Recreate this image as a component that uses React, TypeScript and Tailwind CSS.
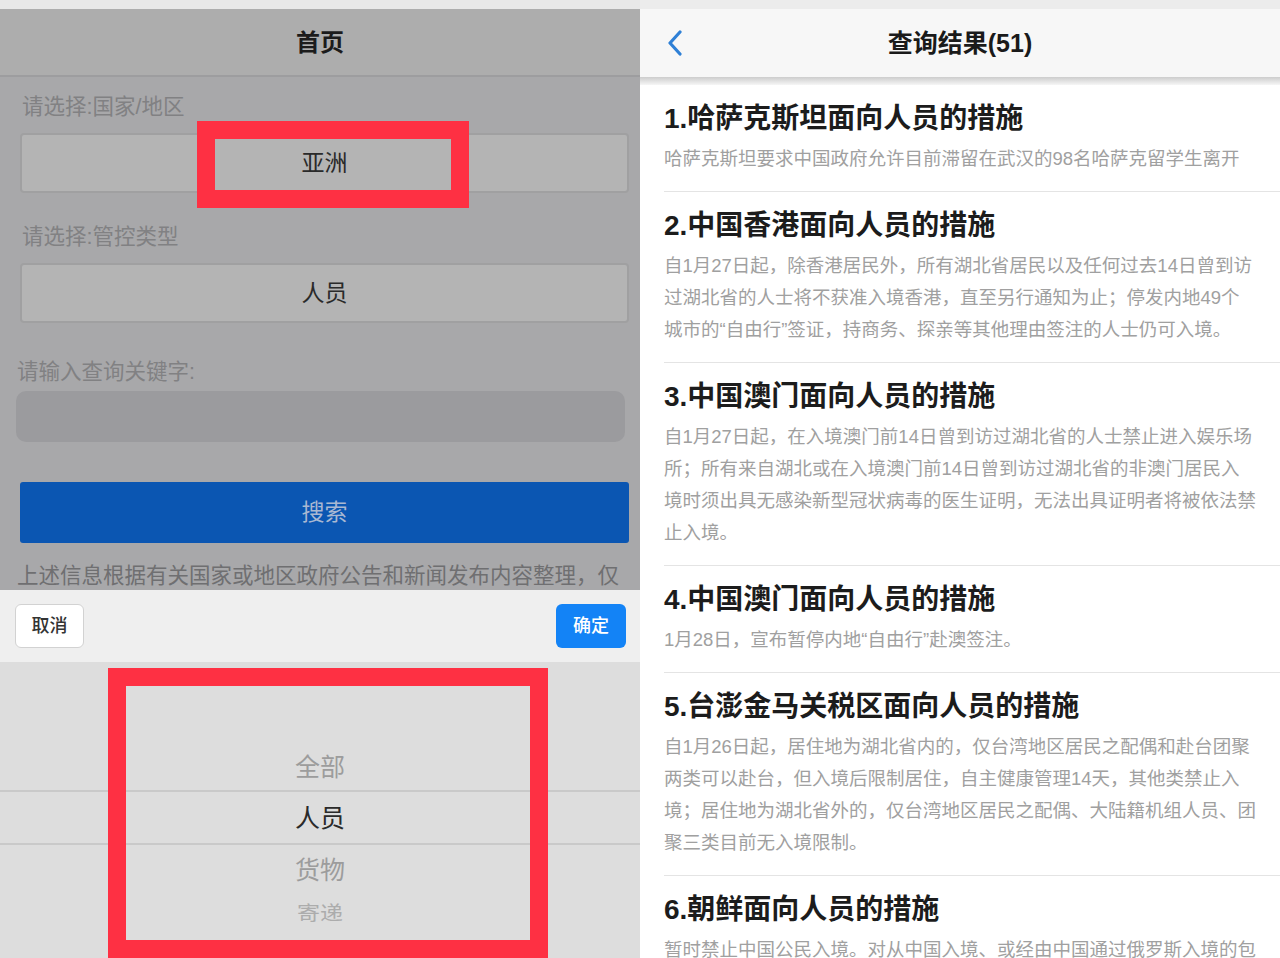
import React from "react";

const items: { title: string; lines: string[] }[] = [
  {
    title: "1.哈萨克斯坦面向人员的措施",
    lines: ["哈萨克斯坦要求中国政府允许目前滞留在武汉的98名哈萨克留学生离开"],
  },
  {
    title: "2.中国香港面向人员的措施",
    lines: [
      "自1月27日起，除香港居民外，所有湖北省居民以及任何过去14日曾到访",
      "过湖北省的人士将不获准入境香港，直至另行通知为止；停发内地49个",
      "城市的“自由行”签证，持商务、探亲等其他理由签注的人士仍可入境。",
    ],
  },
  {
    title: "3.中国澳门面向人员的措施",
    lines: [
      "自1月27日起，在入境澳门前14日曾到访过湖北省的人士禁止进入娱乐场",
      "所；所有来自湖北或在入境澳门前14日曾到访过湖北省的非澳门居民入",
      "境时须出具无感染新型冠状病毒的医生证明，无法出具证明者将被依法禁",
      "止入境。",
    ],
  },
  {
    title: "4.中国澳门面向人员的措施",
    lines: ["1月28日，宣布暂停内地“自由行”赴澳签注。"],
  },
  {
    title: "5.台澎金马关税区面向人员的措施",
    lines: [
      "自1月26日起，居住地为湖北省内的，仅台湾地区居民之配偶和赴台团聚",
      "两类可以赴台，但入境后限制居住，自主健康管理14天，其他类禁止入",
      "境；居住地为湖北省外的，仅台湾地区居民之配偶、大陆籍机组人员、团",
      "聚三类目前无入境限制。",
    ],
  },
  {
    title: "6.朝鲜面向人员的措施",
    lines: ["暂时禁止中国公民入境。对从中国入境、或经由中国通过俄罗斯入境的包"],
  },
];

function LeftPanel() {
  return (
    <div className="relative w-[640px] h-[958px] shrink-0 overflow-hidden bg-[#a8a8aa] flex flex-col">
      <div className="h-[9px] shrink-0 bg-[#e8e8e8]" />
      <div className="h-[68px] shrink-0 bg-[#adadad] flex items-center justify-center border-b-2 border-[#9d9d9f]">
        <span className="text-[24px] font-bold text-[#1c1c1c] leading-none pt-[2px]">首页</span>
      </div>
      <div className="flex flex-col shrink-0">
        <div className="mt-[16px] ml-[22px] text-[21.5px] leading-[28px] text-[#818183]">请选择:国家/地区</div>
        <div className="mt-[12px] ml-[20px] mr-[11px] h-[60px] rounded-[4px] border-2 border-[#a0a0a1] bg-[#b4b4b4] flex items-center justify-center">
          <span className="text-[23px] text-[#2a2a2a]">亚洲</span>
        </div>
        <div className="mt-[30px] ml-[22px] text-[21.5px] leading-[28px] text-[#818183]">请选择:管控类型</div>
        <div className="mt-[12px] ml-[20px] mr-[11px] h-[60px] rounded-[4px] border-2 border-[#a0a0a1] bg-[#b4b4b4] flex items-center justify-center">
          <span className="text-[23px] text-[#2a2a2a]">人员</span>
        </div>
        <div className="mt-[35px] ml-[17px] text-[21.5px] leading-[28px] text-[#818183]">请输入查询关键字:</div>
        <div className="mt-[5px] ml-[16px] mr-[15px] h-[51px] rounded-[10px] bg-[#9b9b9e]" />
        <div className="mt-[40px] ml-[20px] mr-[11px] h-[61px] rounded-[3px] bg-[#0b56b2] flex items-center justify-center">
          <span className="text-[23px] text-[#a9b8d2]">搜索</span>
        </div>
        <div className="mt-[18px] ml-[17px] text-[21.5px] leading-[30px] text-[#6f6f71] whitespace-nowrap">
          上述信息根据有关国家或地区政府公告和新闻发布内容整理，仅
        </div>
      </div>

      {/* bottom picker sheet */}
      <div className="absolute left-0 right-0 bottom-0 h-[368px] flex flex-col">
        <div className="h-[72px] shrink-0 bg-[#efefef] flex items-center justify-between pl-[15px] pr-[14px]">
          <div className="w-[69px] h-[44px] rounded-[6px] bg-white border border-[#d2d2d2] flex items-center justify-center">
            <span className="text-[18px] text-[#333] font-medium">取消</span>
          </div>
          <div className="w-[70px] h-[44px] rounded-[6px] bg-[#1383f6] flex items-center justify-center">
            <span className="text-[18px] text-white font-medium">确定</span>
          </div>
        </div>
        <div className="flex-1 bg-[#dddddd] flex flex-col">
          <div className="h-[78px] shrink-0" />
          <div className="h-[50px] shrink-0 flex items-center justify-center text-[25px] text-[#9c9c9c] pt-[6px]">全部</div>
          <div className="h-[55px] shrink-0 border-y-2 border-[#c9c9c9] flex items-center justify-center text-[25px] text-[#2a2a2a] pt-[2px]">
            人员
          </div>
          <div className="h-[50px] shrink-0 flex items-center justify-center text-[25px] text-[#9c9c9c] pt-[2px]">货物</div>
          <div className="h-[36px] shrink-0 flex items-center justify-center text-[23px] text-[#acacac] scale-y-[0.85]">寄递</div>
        </div>
      </div>

      {/* red annotation boxes */}
      <div className="absolute left-[197px] top-[121px] w-[272px] h-[87px] border-[18px] border-[#fe3043]" />
      <div className="absolute left-[108px] top-[668px] w-[440px] h-[290px] border-[18px] border-[#fe3043]" />
    </div>
  );
}

function RightPanel() {
  return (
    <div className="w-[640px] h-[958px] shrink-0 overflow-hidden bg-white flex flex-col">
      <div className="h-[9px] shrink-0 bg-[#ececec]" />
      <div className="h-[68px] shrink-0 bg-[#f7f7f7] relative flex items-center justify-center">
        <svg className="absolute left-[26px] top-[21px]" width="18" height="26" viewBox="0 0 18 26" fill="none">
          <path d="M14 2 L4 13 L14 24" stroke="#2f80d6" strokeWidth="3.2" strokeLinecap="round" strokeLinejoin="round" />
        </svg>
        <span className="text-[25px] font-bold text-[#1a1a1a] leading-none">查询结果(51)</span>
      </div>
      <div className="h-[8px] shrink-0 bg-gradient-to-b from-[#cdcdcd] to-[#f6f6f6]" />
      <div className="flex flex-col shrink-0">
        {items.map((it, i) => (
          <div key={i} className="ml-[24px] pt-[16px] pb-[16px] border-b border-[#e4e4e4] shrink-0">
            <div className="text-[28px] leading-[36px] font-bold text-[#1c1c1c] whitespace-nowrap">{it.title}</div>
            <div className="mt-[6px] text-[18.5px] leading-[32px] text-[#a0a0a0]">
              {it.lines.map((l, j) => (
                <div key={j} className="whitespace-nowrap">
                  {l}
                </div>
              ))}
            </div>
          </div>
        ))}
      </div>
    </div>
  );
}

export default function App() {
  return (
    <div className="w-[1280px] h-[958px] overflow-hidden flex font-['Liberation_Sans','Noto_Sans_CJK_SC',sans-serif]">
      <LeftPanel />
      <RightPanel />
    </div>
  );
}
